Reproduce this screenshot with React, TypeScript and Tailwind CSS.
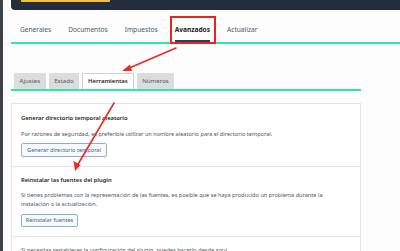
const font = { fontFamily: '"Noto Sans", "Open Sans", sans-serif' };

const mainTabs = ['Generales', 'Documentos', 'Impuestos', 'Avanzados', 'Actualizar'];
const subTabs = ['Ajustes', 'Estado', 'Herramientas', 'Números'];

function Arrows() {
  return (
    <svg className="pointer-events-none absolute inset-0" width="400" height="251">
      <g stroke="#ec2a22" strokeWidth="1.6" fill="none" strokeLinecap="round">
        <line x1="176" y1="48" x2="127" y2="69" />
        <line x1="114" y1="103" x2="77" y2="166" />
      </g>
      <polygon points="122,71 130,64.5 132,71" fill="#ec2a22" />
      <polygon points="75,171 73.5,161 80.5,165" fill="#ec2a22" />
    </svg>
  );
}

export default function App() {
  return (
    <div className="relative flex h-[251px] w-[400px] overflow-hidden bg-[#fdfdfd]" style={font}>
      <div className="w-[3px] shrink-0 bg-[#3d4247]" />
      <div className="flex flex-1 flex-col pl-[8px]">
        {/* top bar */}
        <div className="h-[10px] shrink-0 rounded-bl-[4px] bg-[#252c3c]">
          <div className="ml-[10px] h-[2px] w-[89px] rounded-b-[1px] bg-[#f0c043]" />
        </div>

        {/* main tabs */}
        <div className="flex h-[34px] shrink-0 items-end gap-[17px] border-b-2 border-[#2de8a7] pl-[9px]">
          {mainTabs.map((t) => (
            <div
              key={t}
              className={
                t === 'Avanzados'
                  ? 'border-b-2 border-[#2f3a5e] pb-[6px] text-[6.6px] font-bold leading-[8px] text-[#1d2327]'
                  : 'pb-[8px] text-[6.6px] leading-[8px] text-[#50575e]'
              }
            >
              {t}
            </div>
          ))}
        </div>

        {/* sub tabs */}
        <div className="mt-[29px] flex w-[350px] shrink-0 gap-[3px] border-b-2 border-[#2de8a7] pl-[3px]">
          {subTabs.map((t) =>
            t === 'Herramientas' ? (
              <div
                key={t}
                className="flex h-[16px] items-center border border-b-0 border-[#cfd0d2] bg-white px-[5px] text-[5.9px] font-semibold text-[#1d2327]"
              >
                {t}
              </div>
            ) : (
              <div
                key={t}
                className="flex h-[16px] items-center bg-[#dcdcde] px-[5.5px] text-[6.1px] text-[#50575e]"
              >
                {t}
              </div>
            )
          )}
        </div>

        {/* panel */}
        <div className="mt-[12px] w-[350px] shrink-0 border border-[#e3e3e3] bg-white">
          <div className="border-b border-[#e3e3e3] px-[9px] pb-[9px] pt-[10px]">
            <div className="text-[5.8px] font-semibold leading-[8px] text-[#1d2327]">
              Generar directorio temporal aleatorio
            </div>
            <div className="mt-[8px] text-[5.6px] leading-[8px] text-[#50575e]">
              Por razones de seguridad, es preferible utilizar un nombre aleatorio para el directorio temporal.
            </div>
            <div className="mt-[5px] flex h-[14px] w-[86px] items-center justify-center rounded-[2px] border border-[#8fb0cf] bg-[#f7f9fb] text-[5.6px] text-[#3b679a]">
              Generar directorio temporal
            </div>
          </div>
          <div className="border-b border-[#e3e3e3] px-[9px] pb-[9px] pt-[9px]">
            <div className="text-[5.8px] font-semibold leading-[8px] text-[#1d2327]">
              Reinstalar las fuentes del plugin
            </div>
            <div className="mt-[7px] text-[5.6px] leading-[9px] text-[#50575e]">
              Si tienes problemas con la representación de las fuentes, es posible que se haya producido un problema durante la
              instalación o la actualización.
            </div>
            <div className="mt-[5px] flex h-[13px] w-[57px] items-center justify-center rounded-[2px] border border-[#8fb0cf] bg-[#f7f9fb] text-[5.6px] text-[#3b679a]">
              Reinstalar fuentes
            </div>
          </div>
          <div className="px-[9px] pt-[9px]">
            <div className="text-[5.6px] leading-[8px] text-[#50575e]">
              Si necesitas restablecer la configuración del plugin, puedes hacerlo desde aquí.
            </div>
          </div>
        </div>
      </div>

      {/* red highlight around active tab */}
      <div className="absolute left-[170px] top-[16px] h-[28px] w-[46px] border-2 border-[#e8241f]" />
      <Arrows />
    </div>
  );
}
